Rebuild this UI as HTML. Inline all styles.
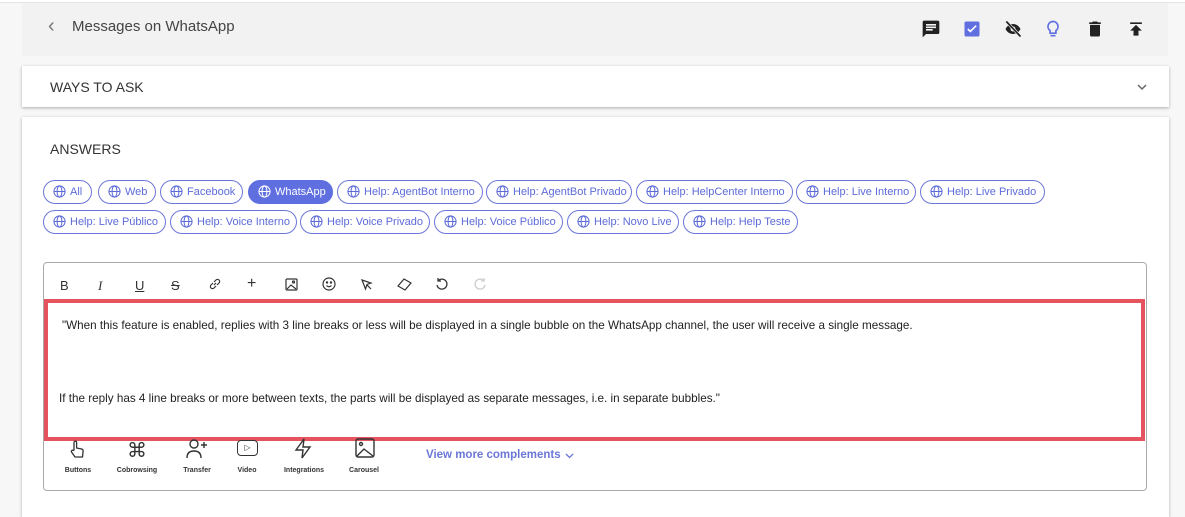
<!DOCTYPE html>
<html><head><meta charset="utf-8"><style>
*{box-sizing:border-box;margin:0;padding:0}
body{width:1185px;height:504px;overflow:hidden;background:#f7f7f7;font-family:"Liberation Sans",sans-serif;color:#333;position:relative}
.top{position:absolute;left:0;top:0;width:1185px;height:3px;background:#fff;border-bottom:1px solid #e4e4e4}
.hdr{position:absolute;left:22px;top:3px;width:1146px;height:53px;background:#f2f2f2}
.hdr .t{position:absolute;left:50px;top:15px;font-size:15px;color:#444}
.hdr .b{position:absolute;left:26px;top:12px;font-size:20px;color:#777}
.card{position:absolute;left:22px;width:1147px;background:#fff;box-shadow:0 1px 3px rgba(0,0,0,.3)}
.ic{position:absolute;top:16px}
.chip{position:absolute;height:24px;border:1px solid #6b77d8;border-radius:12px;color:#5d6bd8;font-size:11px;line-height:22px;padding-left:26px;white-space:nowrap}
.chip svg{position:absolute;left:9px;top:4px}
.chip.on{background:#5f6fe0;color:#fff;border-color:#5f6fe0}
.ed{position:absolute;left:43px;top:262px;width:1104px;height:229px;border:1px solid #aaa;border-radius:4px;background:#fff}
.tb{position:absolute;top:278px;font-size:13px;color:#333}
.red{position:absolute;left:44px;top:299px;width:1101px;height:142px;border:4px solid #e5535f;background:#fff}
.red p{position:absolute;font-size:11.7px;color:#222;white-space:nowrap}
.cp{position:absolute;top:467px;font-size:7px;font-weight:bold;color:#333;text-align:center;width:60px}
</style></head><body>
<div class="top"></div>
<div class="hdr"><span class="b">&lsaquo;</span><span class="t">Messages on WhatsApp</span>
<svg class="ic" style="left:899px" width="20" height="20" viewBox="0 0 24 24"><path fill="#222" d="M20 2H4a2 2 0 0 0-2 2v18l4-4h14a2 2 0 0 0 2-2V4a2 2 0 0 0-2-2zM6 9h12v2H6zm8 5H6v-2h8zm4-6H6V6h12z"/></svg>
<svg class="ic" style="left:940px" width="20" height="20" viewBox="0 0 24 24"><rect x="3" y="3" width="18" height="18" rx="2" fill="#5f6fe0"/><path d="M7 12l3 3 7-7" stroke="#fff" stroke-width="2" fill="none"/></svg>
<svg class="ic" style="left:980px" width="22" height="20" viewBox="0 0 24 24"><path fill="#222" d="M12 6c4 0 7.3 2.5 9 6-1.7 3.5-5 6-9 6s-7.3-2.5-9-6c1.7-3.5 5-6 9-6zm0 3a3 3 0 1 0 0 6 3 3 0 0 0 0-6z"/><path d="M4 3l17 18" stroke="#f2f2f2" stroke-width="3.5"/><path d="M4 3l17 18" stroke="#222" stroke-width="2"/></svg>
<svg class="ic" style="left:1021px" width="20" height="20" viewBox="0 0 24 24"><path fill="none" stroke="#5f6fe0" stroke-width="2" d="M12 3a6 6 0 0 0-3.5 10.9V17h7v-3.1A6 6 0 0 0 12 3zM9 20h6"/></svg>
<svg class="ic" style="left:1063px" width="20" height="20" viewBox="0 0 24 24"><path fill="#222" d="M6 19a2 2 0 0 0 2 2h8a2 2 0 0 0 2-2V7H6zM19 4h-3.5l-1-1h-5l-1 1H5v2h14z"/></svg>
<svg class="ic" style="left:1104px" width="20" height="20" viewBox="0 0 24 24"><path fill="#222" d="M5 4h14v2H5zm0 10h4v6h6v-6h4l-7-7z"/></svg>
</div>
<div class="card" style="top:66px;height:41px"><span style="position:absolute;left:28px;top:13px;font-size:14px;color:#333">WAYS TO ASK</span>
<svg style="position:absolute;left:1114px;top:16px" width="12" height="10" viewBox="0 0 12 10"><path d="M2 3l4 4 4-4" stroke="#666" stroke-width="1.5" fill="none"/></svg></div>
<div class="card" style="top:117px;height:400px"><span style="position:absolute;left:28px;top:24px;font-size:14px;color:#333">ANSWERS</span></div>
<div id="chips"></div>
<div class="ed"></div>
<div class="tb" style="left:60px">B</div>
<div class="tb" style="left:98px;font-style:italic;font-family:'Liberation Serif'">I</div>
<div class="tb" style="left:135px;text-decoration:underline">U</div>
<div class="tb" style="left:171px;text-decoration:line-through">S</div>
<svg style="position:absolute;left:208px;top:277px" width="14" height="14" viewBox="0 0 14 14" fill="none" stroke="#333" stroke-width="1.2"><path d="M6 8l2-2M5 6L3 8a2 2 0 0 0 3 3l2-2M9 8l2-2a2 2 0 0 0-3-3L6 5"/></svg>
<div class="tb" style="left:247px;font-size:16px;top:275px">+</div>
<svg style="position:absolute;left:285px;top:278px" width="13" height="13" viewBox="0 0 13 13" fill="none" stroke="#333" stroke-width="1.2"><rect x="1" y="1" width="11" height="11" rx="1"/><path d="M2 11l4-4 5 4"/><circle cx="8.5" cy="4" r="1"/></svg>
<svg style="position:absolute;left:322px;top:277px" width="14" height="14" viewBox="0 0 14 14" fill="none" stroke="#333" stroke-width="1.2"><circle cx="7" cy="7" r="6"/><path d="M4.5 8.5q2.5 2.5 5 0"/><circle cx="5" cy="5.5" r=".6"/><circle cx="9" cy="5.5" r=".6"/></svg>
<svg style="position:absolute;left:360px;top:278px" width="13" height="13" viewBox="0 0 13 13" fill="none" stroke="#333" stroke-width="1.2"><path d="M2 2l9 3-4 1.5L5.5 11z M7 7l4 4"/></svg>
<svg style="position:absolute;left:397px;top:277px" width="15" height="14" viewBox="0 0 15 14" fill="none" stroke="#333" stroke-width="1.2"><path d="M1 9l6-7 7 4-6 7z"/></svg>
<svg style="position:absolute;left:435px;top:277px" width="14" height="14" viewBox="0 0 14 14" fill="none" stroke="#333" stroke-width="1.3"><path d="M3 4a5 5 0 1 1-1 4M3 1v3h3"/></svg>
<svg style="position:absolute;left:473px;top:277px" width="14" height="14" viewBox="0 0 14 14" fill="none" stroke="#ccc" stroke-width="1.3"><path d="M11 4a5 5 0 1 0 1 4M11 1v3H8"/></svg>
<div class="red">
<p style="left:14px;top:16px">"When this feature is enabled, replies with 3 line breaks or less will be displayed in a single bubble on the WhatsApp channel, the user will receive a single message.</p>
<p style="left:11px;top:89px">If the reply has 4 line breaks or more between texts, the parts will be displayed as separate messages, i.e. in separate bubbles."</p>
</div>
<svg style="position:absolute;left:68px;top:440px" width="18" height="18" viewBox="0 0 18 18" fill="none" stroke="#333" stroke-width="1.3"><path d="M6 10V2.5a1.3 1.3 0 0 1 2.6 0V8l5 1a2 2 0 0 1 1.5 2.2L14.5 17H7l-3.5-5a1.2 1.2 0 0 1 1.8-1.5z"/></svg>
<div style="position:absolute;left:127px;top:438px;font-size:20px">⌘</div>
<svg style="position:absolute;left:185px;top:439px" width="24" height="20" viewBox="0 0 24 20" fill="none" stroke="#333" stroke-width="1.4"><circle cx="9" cy="5" r="4"/><path d="M2 19q0-7 7-7t7 7M19 3v6M16 6h6"/></svg>
<div style="position:absolute;left:237px;top:440px;width:21px;height:16px;border:1.5px solid #333;border-radius:4px;font-size:8px;text-align:center;line-height:13px">▷</div>
<svg style="position:absolute;left:293px;top:438px" width="20" height="21" viewBox="0 0 20 21" fill="none" stroke="#333" stroke-width="1.4"><path d="M11 1L3 12h7l-1 8 8-11h-7z"/></svg>
<svg style="position:absolute;left:355px;top:438px" width="20" height="20" viewBox="0 0 20 20" fill="none" stroke="#333" stroke-width="1.4"><rect x="1" y="1" width="18" height="18" rx="2"/><path d="M2 18l7-7 9 7"/><circle cx="6" cy="6" r="1.5"/></svg>
<div class="cp" style="left:48px">Buttons</div>
<div class="cp" style="left:107px">Cobrowsing</div>
<div class="cp" style="left:167px">Transfer</div>
<div class="cp" style="left:217px">Video</div>
<div class="cp" style="left:274px">Integrations</div>
<div class="cp" style="left:334px">Carousel</div>
<div style="position:absolute;left:426px;top:449px;font-size:11.5px;font-weight:bold;color:#6b77d8">View more complements</div>
<svg style="position:absolute;left:564px;top:451px" width="11" height="9" viewBox="0 0 11 9"><path d="M2 3l3.5 3.5L9 3" stroke="#6b77d8" stroke-width="1.3" fill="none"/></svg>
<script>
var g='<svg width="13" height="13" viewBox="0 0 14 14" fill="none" stroke="currentColor" stroke-width="1.1"><circle cx="7" cy="7" r="6"/><ellipse cx="7" cy="7" rx="2.6" ry="6"/><path d="M1 7h12"/></svg>';
var c=[["All",43,49,180],["Web",98,58,180],["Facebook",160,83,180],["WhatsApp",248,85,180,1],["Help: AgentBot Interno",337,146,180],["Help: AgentBot Privado",486,146,180],["Help: HelpCenter Interno",636,157,180],["Help: Live Interno",796,120,180],["Help: Live Privado",920,125,180],
["Help: Live Público",43,123,210],["Help: Voice Interno",170,127,210],["Help: Voice Privado",300,130,210],["Help: Voice Público",434,129,210],["Help: Novo Live",567,112,210],["Help: Help Teste",683,115,210]];
var h='';c.forEach(function(x){h+='<div class="chip'+(x[4]?' on':'')+'" style="left:'+x[1]+'px;top:'+x[3]+'px;width:'+x[2]+'px">'+g+x[0]+'</div>'});
document.getElementById('chips').innerHTML=h;
</script>
</body></html>
